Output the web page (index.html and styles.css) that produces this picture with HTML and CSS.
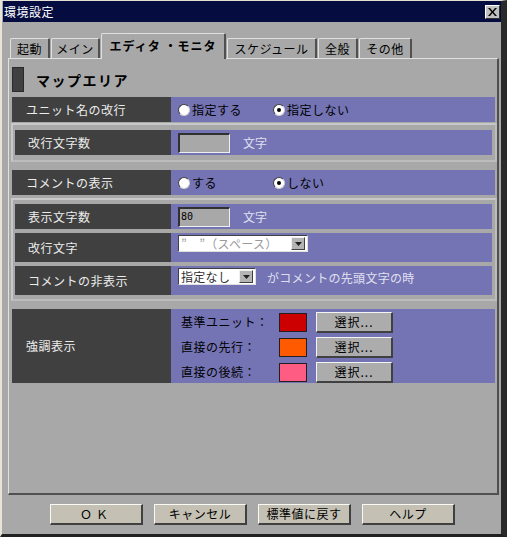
FILE: index.html
```html
<!DOCTYPE html>
<html lang="ja">
<head>
<meta charset="utf-8">
<link rel="stylesheet" href="styles.css">
</head>
<body>
<div class="window">
  <div class="titlebar">
    <span class="title">環境設定</span>
    <span class="close"><svg width="9" height="8" viewBox="0 0 9 8"><path d="M0 0h2l2.5 3 2.5-3h2l-3.5 4 3.5 4h-2l-2.5-3-2.5 3h-2l3.5-4z" fill="#000"/></svg></span>
  </div>
  <div class="tabs">
    <div class="tab t1">起動</div>
    <div class="tab t2">メイン</div>
    <div class="tab t3 active">エディタ ・モニタ</div>
    <div class="tab t4">スケジュール</div>
    <div class="tab t5">全般</div>
    <div class="tab t6">その他</div>
  </div>
  <div class="panel">
    <div class="section-head"><span class="marker"></span><span class="head-text">マップエリア</span></div>

    <div class="row">
      <div class="label">ユニット名の改行</div>
      <div class="value">
        <span class="radio-item"><span class="radio"></span>指定する</span>
        <span class="radio-item"><span class="radio on"></span>指定しない</span>
      </div>
    </div>

    <div class="group g1">
      <div class="row">
        <div class="label">改行文字数</div>
        <div class="value">
          <span class="input"></span>
          <span class="dim unit">文字</span>
        </div>
      </div>
    </div>

    <div class="row r3">
      <div class="label">コメントの表示</div>
      <div class="value">
        <span class="radio-item"><span class="radio"></span>する</span>
        <span class="radio-item"><span class="radio on"></span>しない</span>
      </div>
    </div>

    <div class="group g2">
      <div class="row">
        <div class="label">表示文字数</div>
        <div class="value">
          <span class="input"><span class="num">80</span></span>
          <span class="dim unit">文字</span>
        </div>
      </div>
      <div class="row tall">
        <div class="label">改行文字</div>
        <div class="value top">
          <span class="combo wide"><span class="combo-text grey">”　”（スペース）</span><span class="arrow"><svg width="7" height="4" viewBox="0 0 7 4"><path d="M0 0h7L3.5 4z" fill="#202020"/></svg></span></span>
        </div>
      </div>
      <div class="row tall">
        <div class="label">コメントの非表示</div>
        <div class="value top">
          <span class="combo narrow"><span class="combo-text">指定なし</span><span class="arrow"><svg width="7" height="4" viewBox="0 0 7 4"><path d="M0 0h7L3.5 4z" fill="#202020"/></svg></span></span>
          <span class="dim hint">がコメントの先頭文字の時</span>
        </div>
      </div>
    </div>

    <div class="row emph">
      <div class="label">強調表示</div>
      <div class="value colors">
        <div class="color-line"><span class="cname">基準ユニット：</span><span class="swatch red"></span><span class="sel">選択...</span></div>
        <div class="color-line"><span class="cname">直接の先行：</span><span class="swatch orange"></span><span class="sel">選択...</span></div>
        <div class="color-line"><span class="cname">直接の後続：</span><span class="swatch pink"></span><span class="sel">選択...</span></div>
      </div>
    </div>
  </div>
  <div class="footer">
    <span class="btn ok">ＯＫ</span>
    <span class="btn">キャンセル</span>
    <span class="btn">標準値に戻す</span>
    <span class="btn">ヘルプ</span>
  </div>
</div>
</body>
</html>
```

FILE: styles.css
```css
* { box-sizing: border-box; }
html, body { margin: 0; padding: 0; background: #a8a8a8; }
body {
  font-family: "Noto Sans CJK JP", "Noto Sans", sans-serif;
  font-size: 12px;
  line-height: 14px;
  color: #000;
}
.window {
  width: 507px;
  height: 537px;
  background: #a8a8a8;
  border-top: 1px solid #e4e0d4;
  border-left: 2px solid #e8e4d8;
  border-right: 6px solid #2a2a2a;
  border-bottom: 3px solid #202020;
  display: flex;
  flex-direction: column;
}
.titlebar {
  height: 21px;
  margin: 0 0 0 1px;
  background: #040c40;
  display: flex;
  align-items: center;
  justify-content: space-between;
  padding: 0 0 0 1px;
}
.title { color: #fff; font-size: 12px; letter-spacing: 0.5px; }
.close {
  width: 15px;
  height: 14px;
  margin-right: 1px;
  background: #c0c0c0;
  border-top: 1px solid #fff;
  border-left: 1px solid #fff;
  border-right: 1px solid #303030;
  border-bottom: 1px solid #303030;
  display: flex;
  align-items: center;
  justify-content: center;
}
.tabs {
  margin-top: 11px;
  height: 25px;
  padding-left: 8px;
  display: flex;
  align-items: flex-end;
  gap: 1px;
  position: relative;
  z-index: 1;
}
.tab {
  height: 20px;
  border-top: 1px solid #e0e0e0;
  border-left: 1px solid #e0e0e0;
  border-right: 2px solid #505050;
  border-radius: 2px 2px 0 0;
  display: flex;
  align-items: center;
  justify-content: center;
  font-size: 12px;
  letter-spacing: 0.5px;
  padding-top: 1px;
}
.t1 { width: 40px; }
.t2 { width: 49px; }
.t3 { width: 125px; }
.t4 { width: 90px; }
.t5 { width: 40px; }
.t6 { width: 53px; }
.tab.active {
  height: 26px;
  margin-bottom: -1px;
  background: #a8a8a8;
  font-weight: bold;
  letter-spacing: 1px;
  padding-bottom: 2px;
}
.panel {
  margin-left: 6px;
  width: 491px;
  height: 437px;
  border-top: 1px solid #e0e0e0;
  border-left: 1px solid #e0e0e0;
  border-right: 2px solid #505050;
  border-bottom: 2px solid #505050;
  padding: 0 2px 0 3px;
  display: flex;
  flex-direction: column;
}
.section-head {
  margin-top: 8px;
  height: 25px;
  display: flex;
  align-items: center;
}
.marker {
  width: 12px;
  height: 25px;
  background: #404040;
  border: 1px solid #2a2a2a;
}
.head-text {
  margin-left: 12px;
  font-weight: bold;
  font-size: 14px;
  letter-spacing: 1.5px;
}
.row {
  display: flex;
  height: 25px;
  margin-top: 5px;
}
.label {
  width: 159px;
  background: #404040;
  color: #ececec;
  padding-left: 14px;
  display: flex;
  align-items: center;
  letter-spacing: 0.5px;
}
.value {
  flex: 1;
  background: #7474b4;
  display: flex;
  align-items: center;
  padding-left: 7px;
}
.value.top { align-items: flex-start; padding-top: 2px; }
.radio-item {
  display: flex;
  align-items: center;
  width: 95px;
  letter-spacing: 0.5px;
}
.radio {
  width: 12px;
  height: 12px;
  border-radius: 50%;
  background: #fff;
  border-top: 1px solid #404040;
  border-left: 1px solid #404040;
  border-right: 1px solid #d0d0d0;
  border-bottom: 1px solid #d0d0d0;
  margin-right: 2px;
  display: flex;
  align-items: center;
  justify-content: center;
}
.radio.on::after {
  content: "";
  width: 4px;
  height: 4px;
  border-radius: 50%;
  background: #000;
}
.group {
  border: 2px solid #c8c8c8;
  border-right-color: #bcbcbc;
  border-bottom-color: #bcbcbc;
  padding: 5px 3px 5px 2px;
  margin: 1px -2px 0 -1px;
  display: flex;
  flex-direction: column;
  gap: 4px;
}
.group .row { margin-top: 0; }
.group .label { width: 156px; padding-left: 13px; }
.g2 { margin-top: 3px; padding-top: 4px; padding-bottom: 4px; }
.row.tall { height: 29px; }
.r3 { margin-top: 8px; }
.input {
  width: 52px;
  height: 20px;
  background: #a8a8a8;
  border-top: 2px solid #303030;
  border-left: 2px solid #303030;
  border-right: 1px solid #f0f0f0;
  border-bottom: 1px solid #f0f0f0;
  display: flex;
  align-items: center;
}
.num {
  font-family: "DejaVu Sans Mono", "Liberation Mono", monospace;
  font-size: 10px;
  padding-left: 1px;
}
.dim {
  color: #dcdcee;
  text-shadow: 0 0 0.5px #9090c0;
}
.unit { margin-left: 13px; }
.hint { margin-left: 11px; margin-top: 3px; letter-spacing: 0.3px; }
.combo {
  height: 17px;
  background: #fff;
  border-top: 1px solid #404040;
  border-left: 1px solid #404040;
  border-right: 1px solid #e0e0e0;
  border-bottom: 1px solid #e0e0e0;
  display: flex;
  align-items: center;
  justify-content: space-between;
  padding: 0 2px 0 2px;
}
.combo.wide { width: 130px; }
.combo.narrow { width: 78px; }
.combo-text { color: #303030; letter-spacing: 0.3px; }
.combo-text.grey { color: #9a9a9a; }
.arrow {
  width: 14px;
  height: 13px;
  background: #b4b4b4;
  border-top: 1px solid #f0f0f0;
  border-left: 1px solid #f0f0f0;
  border-right: 1px solid #404040;
  border-bottom: 1px solid #404040;
  display: flex;
  align-items: center;
  justify-content: center;
}
.emph { height: 74px; margin-top: 8px; }
.emph .label { padding-left: 14px; }
.colors {
  flex-direction: column;
  align-items: flex-start;
  justify-content: flex-start;
  padding-left: 10px;
  padding-top: 2px;
  gap: 3px;
}
.color-line {
  height: 22px;
  display: flex;
  align-items: center;
}
.cname { width: 98px; letter-spacing: 0.5px; }
.swatch {
  width: 28px;
  height: 19px;
  border: 1px solid #202020;
}
.red { background: #cc0000; }
.orange { background: #ff5a00; }
.pink { background: #ff5c84; }
.sel {
  margin-left: 9px;
  width: 77px;
  height: 21px;
  background: #acacac;
  border-top: 1px solid #f4f4f4;
  border-left: 1px solid #f4f4f4;
  border-right: 2px solid #404040;
  border-bottom: 2px solid #404040;
  display: flex;
  align-items: center;
  justify-content: center;
  letter-spacing: 1px;
}
.footer {
  margin-top: 9px;
  padding-left: 48px;
  display: flex;
  gap: 11px;
}
.btn {
  width: 93px;
  height: 21px;
  background: #c4c0b4;
  border-top: 1px solid #fafaf4;
  border-left: 1px solid #fafaf4;
  border-right: 2px solid #404040;
  border-bottom: 2px solid #404040;
  display: flex;
  align-items: center;
  justify-content: center;
  letter-spacing: 0.5px;
}
.btn.ok { letter-spacing: 4px; }
```
